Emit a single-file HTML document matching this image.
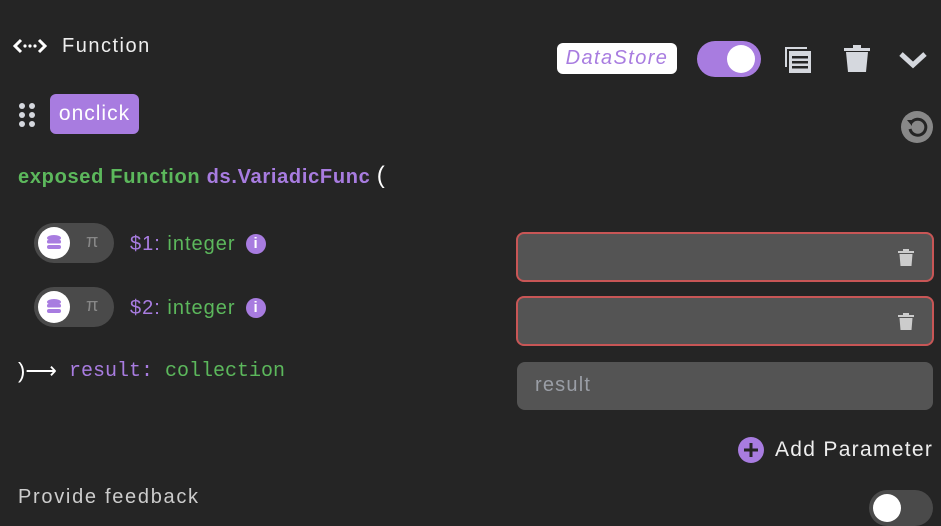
<!DOCTYPE html>
<html><head><style>
*{margin:0;padding:0;box-sizing:border-box}
body{width:941px;height:526px;background:#252525;font-family:"Liberation Sans",sans-serif;color:#eee;position:relative;overflow:hidden}
.a{position:absolute}
.purple{color:#a87ce0}.green{color:#5cb85c}
.field{position:absolute;left:516px;width:418px;height:50px;background:#545454;border-radius:8px}
.err{border:2px solid #c85656}
.tog{position:absolute;left:34px;width:80px;height:40px;border-radius:20px;background:#4a4a4a}
.tog .k{position:absolute;left:4px;top:4px;width:32px;height:32px;border-radius:50%;background:#fff}
.tog .pi{position:absolute;left:52px;top:8px;color:#888;font-size:18px}
.info{display:inline-block;width:20px;height:20px;border-radius:50%;background:#a87ce0;color:#fff;font-size:15px;font-weight:bold;text-align:center;line-height:20px;vertical-align:2px;margin-left:10px;letter-spacing:0}
</style></head><body>
<svg class="a" style="left:13px;top:38px" width="34" height="16" viewBox="0 0 34 16"><path d="M8 2L2 8l6 6M26 2l6 6-6 6" stroke="#fff" stroke-width="3" fill="none"/><circle cx="12" cy="8" r="1.6" fill="#fff"/><circle cx="17" cy="8" r="1.6" fill="#fff"/><circle cx="22" cy="8" r="1.6" fill="#fff"/></svg>
<div class="a" style="left:62px;top:35px;font-size:20px;color:#eee;letter-spacing:1.5px">Function</div>

<div class="a" style="left:557px;top:43px;width:120px;height:31px;background:#fff;border-radius:6px;color:#a87ce0;font-style:italic;font-size:20px;text-align:center;line-height:31px;letter-spacing:1.4px">DataStore</div>
<div class="a" style="left:697px;top:41px;width:64px;height:36px;border-radius:18px;background:#a87ce0"><div class="a" style="left:30px;top:4px;width:28px;height:28px;border-radius:50%;background:#fff"></div></div>
<svg class="a" style="left:783px;top:45px" width="30" height="30" viewBox="0 0 30 30"><path d="M2 2v20h2V4h20V2z" fill="#d5d8de"/><rect x="6" y="6" width="22" height="22" fill="#d5d8de"/><rect x="9" y="11" width="16" height="2.5" fill="#252525"/><rect x="9" y="16" width="16" height="2.5" fill="#252525"/><rect x="9" y="21" width="16" height="2.5" fill="#252525"/></svg>
<svg class="a" style="left:843px;top:45px" width="28" height="28" viewBox="0 0 28 28"><rect x="1" y="3" width="26" height="3" fill="#d5d8de"/><rect x="10" y="0" width="8" height="3" fill="#d5d8de"/><path d="M3 7h22l-2 20H5z" fill="#d5d8de"/></svg>
<svg class="a" style="left:898px;top:50px" width="30" height="20" viewBox="0 0 30 20"><path d="M3 4l12 11 12-11" stroke="#d5d8de" stroke-width="5" fill="none"/></svg>

<svg class="a" style="left:18px;top:102px" width="18" height="26"><g fill="#d5d8de"><circle cx="4" cy="4" r="3"/><circle cx="14" cy="4" r="3"/><circle cx="4" cy="13" r="3"/><circle cx="14" cy="13" r="3"/><circle cx="4" cy="22" r="3"/><circle cx="14" cy="22" r="3"/></g></svg>
<div class="a" style="left:50px;top:94px;width:89px;height:40px;background:#a87ce0;border-radius:6px;color:#fff;font-size:21px;text-align:center;line-height:40px;letter-spacing:1px">onclick</div>
<svg class="a" style="left:901px;top:111px" width="32" height="32" viewBox="0 0 32 32"><circle cx="16" cy="16" r="16" fill="#888"/><path d="M10 12a8 8 0 1 1 -1 6" stroke="#252525" stroke-width="3" fill="none"/><path d="M6 9l5 0 0 6z" fill="#252525"/></svg>

<div class="a" style="left:18px;top:162px;font-size:20px;font-weight:bold;letter-spacing:0.7px"><span class="green">exposed Function</span> <span class="purple">ds.VariadicFunc</span> <span style="color:#fff;font-weight:normal;font-size:24px">(</span></div>

<div class="tog" style="top:223px"><div class="k"><svg width="32" height="32"><g fill="#a87ce0"><ellipse cx="16" cy="11" rx="7" ry="3"/><rect x="9" y="13" width="14" height="3.5" rx="1.5"/><rect x="9" y="18" width="14" height="4" rx="2"/></g></svg></div><div class="pi">π</div></div>
<div class="a" style="left:130px;top:233px;font-size:20px;letter-spacing:1px"><span class="purple">$1:</span> <span class="green">integer</span><span class="info">i</span></div>
<div class="tog" style="top:287px"><div class="k"><svg width="32" height="32"><g fill="#a87ce0"><ellipse cx="16" cy="11" rx="7" ry="3"/><rect x="9" y="13" width="14" height="3.5" rx="1.5"/><rect x="9" y="18" width="14" height="4" rx="2"/></g></svg></div><div class="pi">π</div></div>
<div class="a" style="left:130px;top:297px;font-size:20px;letter-spacing:1px"><span class="purple">$2:</span> <span class="green">integer</span><span class="info">i</span></div>

<div class="a" style="left:18px;top:358px;font-size:22px;color:#fff">)⟶</div>
<div class="a" style="left:69px;top:360px;font-size:20px;font-family:'Liberation Mono',monospace"><span class="purple">result:</span> <span class="green">collection</span></div>

<div class="field err" style="top:232px"><svg class="a" style="left:379px;top:15px" width="18" height="18" viewBox="0 0 18 18"><rect x="1" y="2" width="16" height="2" fill="#ccc"/><rect x="6" y="0" width="6" height="2" fill="#ccc"/><path d="M2.5 5h13l-1 12h-11z" fill="#ccc"/></svg></div>
<div class="field err" style="top:296px"><svg class="a" style="left:379px;top:15px" width="18" height="18" viewBox="0 0 18 18"><rect x="1" y="2" width="16" height="2" fill="#ccc"/><rect x="6" y="0" width="6" height="2" fill="#ccc"/><path d="M2.5 5h13l-1 12h-11z" fill="#ccc"/></svg></div>
<div class="field" style="top:362px;left:517px;width:416px;height:48px"><div class="a" style="left:18px;top:12px;font-size:20px;color:#9a9ea6;letter-spacing:1.2px">result</div></div>

<svg class="a" style="left:738px;top:437px" width="26" height="26"><circle cx="13" cy="13" r="13" fill="#a87ce0"/><path d="M13 6v14M6 13h14" stroke="#252525" stroke-width="3"/></svg>
<div class="a" style="left:775px;top:438px;font-size:21px;color:#eee;letter-spacing:1.3px">Add Parameter</div>

<div class="a" style="left:18px;top:486px;font-size:20px;color:#ccc;letter-spacing:1.7px">Provide feedback</div>
<div class="a" style="left:869px;top:490px;width:64px;height:36px;border-radius:18px;background:#4a4a4a"><div class="a" style="left:4px;top:4px;width:28px;height:28px;border-radius:50%;background:#fff"></div></div>
</body></html>
